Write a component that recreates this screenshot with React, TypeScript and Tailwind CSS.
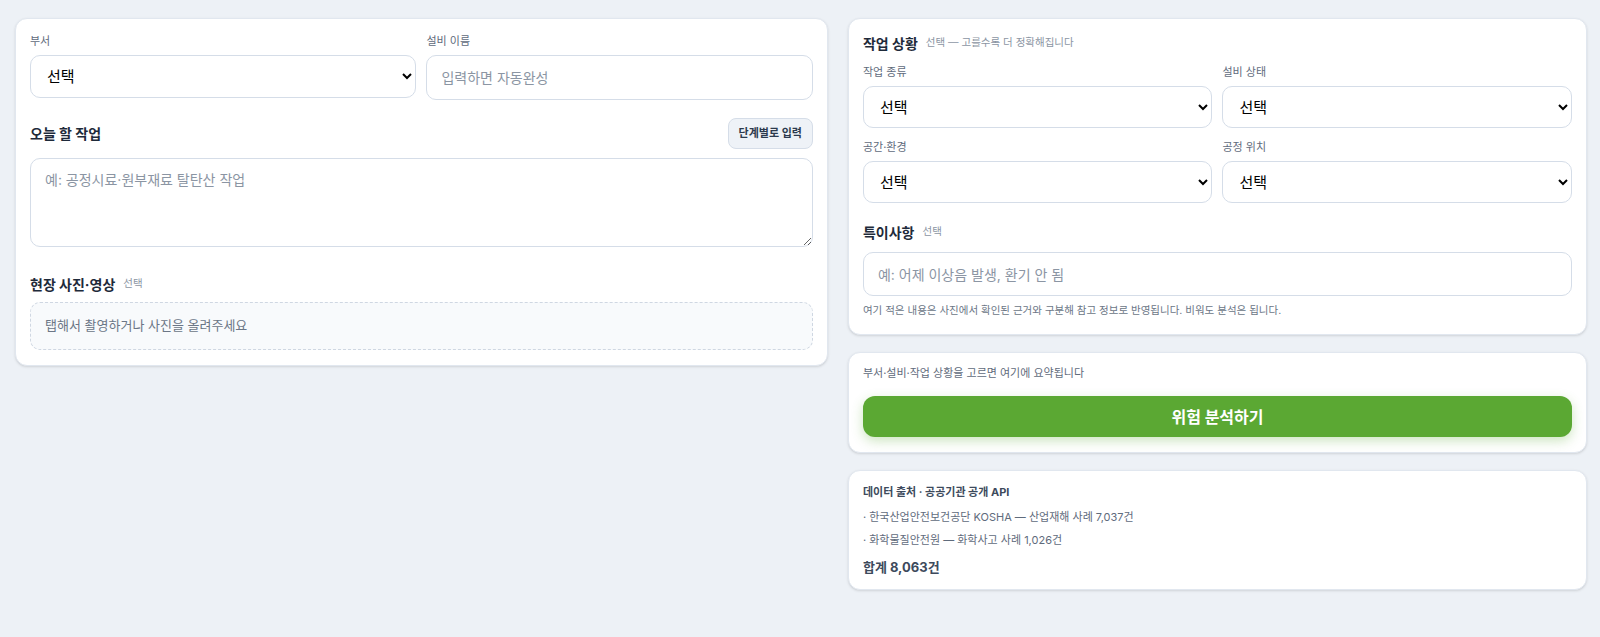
import React from 'react';

const font = { fontFamily: 'Inter, "Noto Sans CJK KR", sans-serif' };

const Label: React.FC<{ children: React.ReactNode }> = ({ children }) => (
  <div className="h-4 text-[11px] leading-4 text-[#5f6b7c] mb-[6px]">{children}</div>
);

const Select: React.FC<{ h: string }> = ({ h }) => (
  <select
    className={`w-full ${h} rounded-[10px] border border-[#d5dde8] bg-white px-3 text-[15px] text-black`}
    defaultValue=""
  >
    <option value="">선택</option>
  </select>
);

const App: React.FC = () => {
  return (
    <div className="min-h-[637px] bg-[#edf1f6] pl-[15px] pr-[13px] pt-[18px]" style={font}>
      <div className="grid grid-cols-[1.1fr_1fr] gap-5 items-start">
        {/* left */}
        <div className="rounded-xl border border-[#e1e7ef] bg-white px-[14px] pt-[14px] pb-[15px] shadow-sm">
          <div className="grid grid-cols-2 gap-[10px]">
            <div>
              <Label>부서</Label>
              <Select h="h-[43px]" />
            </div>
            <div>
              <Label>설비 이름</Label>
              <input
                className="w-full h-[45px] rounded-[10px] border border-[#d5dde8] px-[14px] text-[14px] placeholder:text-[#8b95a3] outline-none"
                placeholder="입력하면 자동완성"
              />
            </div>
          </div>

          <div className="mt-[18px] flex h-[31px] items-center justify-between">
            <h3 className="text-[14px] font-bold text-[#1e2a3a]">오늘 할 작업</h3>
            <button className="h-[31px] rounded-lg border border-[#d5dde8] bg-[#eef2f7] px-[10px] text-[11px] font-bold text-[#2c3a4d]">
              단계별로 입력
            </button>
          </div>
          <textarea
            className="mt-[9px] block w-full h-[89px] rounded-[10px] border border-[#d5dde8] px-[14px] py-[10px] text-[14px] placeholder:text-[#8b95a3] outline-none"
            placeholder="예: 공정시료·원부재료 탈탄산 작업"
          />

          <div className="mt-[26px] flex h-[22px] items-center gap-2">
            <h3 className="text-[14px] font-bold text-[#1e2a3a]">현장 사진·영상</h3>
            <span className="text-[10.5px] text-[#8b95a3]">선택</span>
          </div>
          <div className="mt-[7px] flex h-[48px] items-center rounded-[10px] border border-dashed border-[#cfd7e2] bg-[#f8fafc] px-[14px] text-[13px] text-[#6b7686]">
            탭해서 촬영하거나 사진을 올려주세요
          </div>
        </div>

        {/* right */}
        <div className="flex flex-col gap-[17px]">
          <div className="rounded-xl border border-[#e1e7ef] bg-white px-[14px] pt-[13px] pb-[15px] shadow-sm">
            <div className="flex h-[22px] items-center gap-2">
              <h3 className="text-[14px] font-bold text-[#1e2a3a]">작업 상황</h3>
              <span className="text-[10.5px] text-[#8b95a3]">선택 — 고를수록 더 정확해집니다</span>
            </div>
            <div className="mt-[10px] grid grid-cols-2 gap-x-[10px] gap-y-[11px]">
              <div>
                <Label>작업 종류</Label>
                <Select h="h-[42px]" />
              </div>
              <div>
                <Label>설비 상태</Label>
                <Select h="h-[42px]" />
              </div>
              <div>
                <Label>공간·환경</Label>
                <Select h="h-[42px]" />
              </div>
              <div>
                <Label>공정 위치</Label>
                <Select h="h-[42px]" />
              </div>
            </div>
            <div className="mt-[18px] flex h-[22px] items-center gap-2">
              <h3 className="text-[14px] font-bold text-[#1e2a3a]">특이사항</h3>
              <span className="text-[10.5px] text-[#8b95a3]">선택</span>
            </div>
            <input
              className="mt-[9px] block w-full h-[44px] rounded-[10px] border border-[#d5dde8] px-[14px] text-[14px] placeholder:text-[#8b95a3] outline-none"
              placeholder="예: 어제 이상음 발생, 환기 안 됨"
            />
            <p className="mt-[7px] h-4 text-[10.5px] leading-4 text-[#6b7686]">
              여기 적은 내용은 사진에서 확인된 근거와 구분해 참고 정보로 반영됩니다. 비워도 분석은 됩니다.
            </p>
          </div>

          <div className="rounded-xl border border-[#e1e7ef] bg-white px-[14px] pt-[12px] pb-[15px] shadow-sm">
            <p className="h-4 text-[11px] leading-4 text-[#5f6b7c]">부서·설비·작업 상황을 고르면 여기에 요약됩니다</p>
            <button className="mt-[15px] h-[41px] w-full rounded-xl bg-[#5ba833] text-[16px] font-bold text-white shadow-[0_4px_12px_rgba(91,168,51,0.3)]">
              위험 분석하기
            </button>
          </div>

          <div className="rounded-xl border border-[#e1e7ef] bg-white px-[14px] pt-[13px] pb-[13px] shadow-sm">
            <div className="h-4 text-[11px] font-bold leading-4 text-[#3d4a5c]">데이터 출처 · 공공기관 공개 API</div>
            <div className="mt-[9px] h-4 text-[11px] leading-4 text-[#5f6b7c]">· 한국산업안전보건공단 KOSHA — 산업재해 사례 7,037건</div>
            <div className="mt-[7px] h-4 text-[11px] leading-4 text-[#5f6b7c]">· 화학물질안전원 — 화학사고 사례 1,026건</div>
            <div className="mt-[10px] h-[18px] text-[13px] font-bold leading-[18px] text-[#3d4a5c]">합계 8,063건</div>
          </div>
        </div>
      </div>
    </div>
  );
};

export default App;
